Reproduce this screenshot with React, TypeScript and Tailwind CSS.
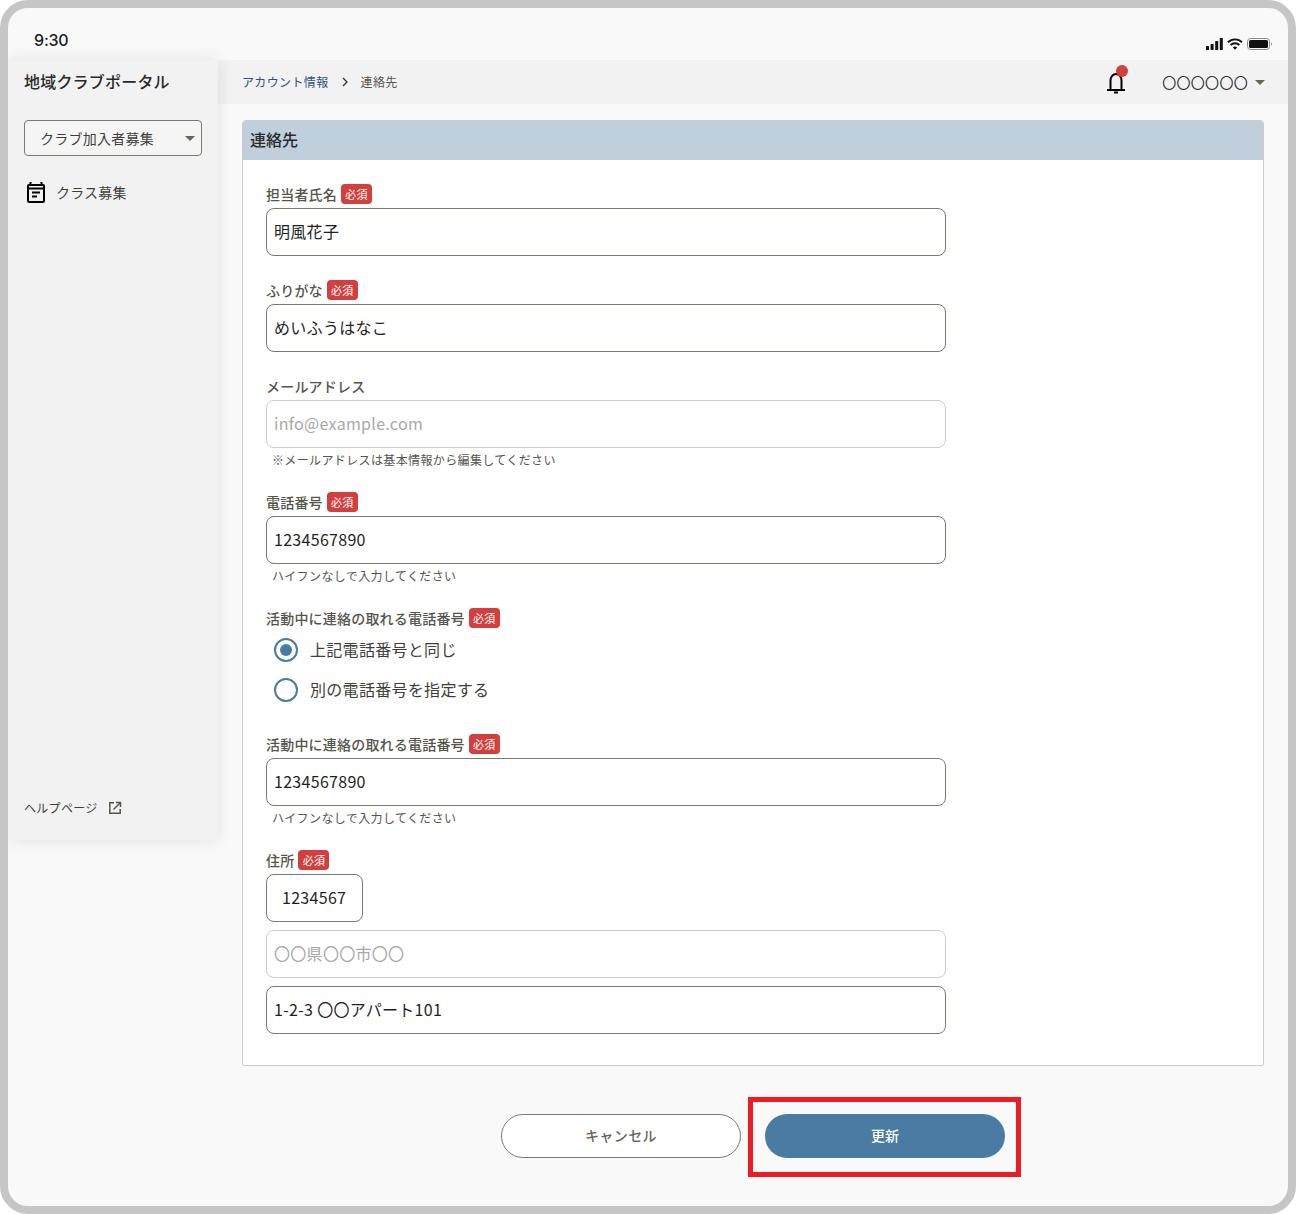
function Required() {
  return (
    <span className="ml-1 inline-flex h-[20px] w-[31px] items-center justify-center rounded-[4px] bg-[#d33f3d] text-[11px] leading-none tracking-[0.2px] text-white">
      必須
    </span>
  );
}

function FieldLabel({ text, required }: { text: string; required?: boolean }) {
  return (
    <div className="flex h-[24px] items-start">
      <span className="text-[14px] leading-[20px] font-medium tracking-[0.2px] text-[#55554b]">{text}</span>
      {required && <Required />}
    </div>
  );
}

function TextInput({ value, disabled, className = 'w-[680px] px-[7px]' }: { value: string; disabled?: boolean; className?: string }) {
  return (
    <input
      readOnly
      value={value}
      className={`block h-[48px] rounded-[8px] border bg-white pb-[2px] text-[16px] tracking-[0.3px] outline-none ${className} ${
        disabled ? 'border-[#cccccc] text-[#a8a8a8]' : 'border-[#7a7a6a] text-[#1f1f1f]'
      }`}
    />
  );
}

function Hint({ text }: { text: string }) {
  return <p className="h-[20px] pl-[6px] text-[12px] leading-[24px] tracking-[0.37px] text-[#55554b]">{text}</p>;
}

function Radio({ label, checked }: { label: string; checked?: boolean }) {
  return (
    <label className="flex h-[40px] items-center pl-2">
      <span className="flex h-[24px] w-[24px] items-center justify-center rounded-full border-2 border-[#4a7ba3] bg-white">
        {checked && <span className="h-[12px] w-[12px] rounded-full bg-[#4a7ba3]" />}
      </span>
      <span className="mb-[2px] ml-3 text-[16px] tracking-[0.3px] text-[#3f3f38]">{label}</span>
    </label>
  );
}

function CalendarIcon() {
  return (
    <svg width="24" height="24" viewBox="0 0 24 24" fill="none" stroke="#000" strokeWidth="2">
      <rect x="4" y="4" width="16" height="17" rx="1" />
      <path d="M4 7.5h16" strokeWidth="2" />
      <path d="M6.5 1v3M17.5 1v3" />
      <path d="M8 11.5h8M8 15.5h5" strokeWidth="1.8" />
    </svg>
  );
}

function BellIcon() {
  return (
    <svg width="24" height="24" viewBox="0 0 24 24" fill="none" stroke="#000" strokeWidth="2">
      <path d="M6.5 20v-9.5a5.5 6.5 0 0 1 11 0V20" />
      <path d="M3 20h18" />
      <path d="M10 22.5h4" />
    </svg>
  );
}

function ExternalIcon() {
  return (
    <svg width="14" height="14" viewBox="0 0 14 14" fill="none" stroke="#55554b" strokeWidth="1.5">
      <path d="M6 1.8H1.8v10.4h10.4V8" />
      <path d="M5.5 8.5 12 2" />
      <path d="M8 1.5h4.500V6" />
    </svg>
  );
}

function StatusIcons() {
  return (
    <div className="flex items-center gap-[4px]">
      <svg width="17" height="12" viewBox="0 0 17 12" fill="#111">
        <rect x="0" y="8" width="3" height="4" rx="0.6" />
        <rect x="4.6" y="6" width="3" height="6" rx="0.6" />
        <rect x="9.2" y="3" width="3" height="9" rx="0.6" />
        <rect x="13.8" y="0" width="3" height="12" rx="0.6" />
      </svg>
      <svg width="16" height="12" viewBox="0 0 16 12" fill="none" stroke="#111" strokeWidth="1.9">
        <path d="M1 4.2a10 10 0 0 1 14 0" />
        <path d="M3.6 7a6.3 6.3 0 0 1 8.8 0" />
        <path d="M8 11.8 5.8 9.5a3.2 3.2 0 0 1 4.4 0Z" fill="#111" stroke="none" />
      </svg>
      <svg width="25" height="12" viewBox="0 0 25 12" fill="none">
        <rect x="0.5" y="0.5" width="22" height="11" rx="3" stroke="#8a8a8a" />
        <rect x="2" y="2" width="19" height="8" rx="1.6" fill="#111" />
        <path d="M24 4.2c.6.3 1 .9 1 1.8s-.4 1.5-1 1.8Z" fill="#8a8a8a" />
      </svg>
    </div>
  );
}

export default function App() {
  return (
    <div className="h-[1214px] w-[1296px] bg-white">
      <div className="flex h-full w-full flex-col overflow-hidden rounded-[28px] border-8 border-[#c6c6c6] bg-[#f9f9f9] font-['Noto_Sans_CJK_JP','Noto_Sans',sans-serif]">
        {/* status bar */}
        <div className="flex h-[52px] shrink-0 items-end justify-between pr-[16px] pb-[10px] pl-[26px]">
          <span className="mb-[-1px] font-['Inter',sans-serif] text-[16px] leading-[22px] font-medium tracking-[-0.2px] text-[#1c1c1c]">9:30</span>
          <StatusIcons />
        </div>

        <div className="flex min-h-0 flex-1">
          {/* sidebar */}
          <aside className="z-10 flex h-[780px] w-[210px] shrink-0 flex-col rounded-b-[4px] rounded-tr-[4px] bg-[#f2f2f2] px-4 shadow-[0_0_16px_rgba(0,0,0,0.10)]">
            <h1 className="mt-[9px] text-[16px] leading-[24px] font-medium tracking-[0.2px] text-[#2a2a2a]">地域クラブポータル</h1>
            <div className="mt-[27px] flex h-[36px] w-[178px] items-center justify-between rounded-[4px] border border-[#7a7a6a] bg-[#f5f5f5] pr-[6px] pl-[15px]">
              <span className="text-[14px] tracking-[0.25px] text-[#3f3f38]">クラブ加入者募集</span>
              <span className="h-0 w-0 border-x-[5px] border-t-[5px] border-x-transparent border-t-[#666658]" />
            </div>
            <div className="mt-[25px] flex h-[24px] items-center">
              <CalendarIcon />
              <span className="mb-[2px] ml-[8px] text-[14px] tracking-[0.2px] text-[#3f3f38]">クラス募集</span>
            </div>
            <div className="mt-auto mb-[22px] flex h-[20px] items-center">
              <span className="text-[12px] tracking-[0.3px] text-[#3f3f38]">ヘルプページ</span>
              <span className="ml-[10px]">
                <ExternalIcon />
              </span>
            </div>
          </aside>

          {/* main */}
          <main className="min-w-0 flex-1">
            <header className="flex h-[44px] items-center justify-between bg-[#f2f2f2] pr-[23px] pl-[24px]">
              <nav className="flex items-center text-[12px] tracking-[0.03em]">
                <span className="text-[#2e5578]">アカウント情報</span>
                <svg className="mx-[12px]" width="8" height="10" viewBox="0 0 8 10" fill="none" stroke="#333" strokeWidth="1.3">
                  <path d="M2 1l4 4-4 4" />
                </svg>
                <span className="text-[#55554b]">連絡先</span>
              </nav>
              <div className="flex items-center">
                <div className="relative mr-[34px] h-[24px] w-[24px]">
                  <BellIcon />
                  <span className="absolute top-[-5px] right-0 h-[12px] w-[12px] rounded-full bg-[#d33f3d]" />
                </div>
                <span className="text-[14px] tracking-[0.3px] text-[#2a2a2a]">〇〇〇〇〇〇</span>
                <span className="ml-[7px] h-0 w-0 border-x-[5px] border-t-[5px] border-x-transparent border-t-[#666658]" />
              </div>
            </header>

            <div className="px-6 pt-4">
              <section className="overflow-hidden rounded-t-[4px] rounded-b-[2px] border border-[#cccccc] bg-white">
                <h2 className="-mx-px -mt-px h-[40px] bg-[#bfd0dc] pl-[8px] text-[16px] leading-[38px] font-medium text-[#2a2a2a]">連絡先</h2>
                <div className="px-[23px] pt-[24px] pb-[31px]">
                  <div className="mb-[24px]">
                    <FieldLabel text="担当者氏名" required />
                    <TextInput value="明風花子" />
                  </div>
                  <div className="mb-[24px]">
                    <FieldLabel text="ふりがな" required />
                    <TextInput value="めいふうはなこ" />
                  </div>
                  <div className="mb-[24px]">
                    <FieldLabel text="メールアドレス" />
                    <TextInput value="info@example.com" disabled />
                    <Hint text="※メールアドレスは基本情報から編集してください" />
                  </div>
                  <div className="mb-[24px]">
                    <FieldLabel text="電話番号" required />
                    <TextInput value="1234567890" />
                    <Hint text="ハイフンなしで入力してください" />
                  </div>
                  <div className="mb-[24px]">
                    <FieldLabel text="活動中に連絡の取れる電話番号" required />
                    <div className="-mt-[2px]">
                      <Radio label="上記電話番号と同じ" checked />
                      <Radio label="別の電話番号を指定する" />
                    </div>
                  </div>
                  <div className="mb-[24px]">
                    <FieldLabel text="活動中に連絡の取れる電話番号" required />
                    <TextInput value="1234567890" />
                    <Hint text="ハイフンなしで入力してください" />
                  </div>
                  <div>
                    <FieldLabel text="住所" required />
                    <div className="flex flex-col gap-2">
                      <TextInput value="1234567" className="w-[97px] px-[15px]" />
                      <TextInput value="〇〇県〇〇市〇〇" disabled />
                      <TextInput value="1-2-3 〇〇アパート101" />
                    </div>
                  </div>
                </div>
              </section>

              <div className="mt-[48px] flex justify-center gap-6">
                <button className="h-[44px] w-[240px] rounded-full border border-[#7a7a6a] bg-white pb-[1px] text-[14px] font-medium tracking-[0.03em] text-[#66665a]">
                  キャンセル
                </button>
                <div className="relative">
                  <button className="h-[44px] w-[240px] rounded-full bg-[#4a7ba3] pb-[1px] text-[14px] font-medium text-white">更新</button>
                  <div className="absolute top-[-17px] left-[-17px] h-[80px] w-[273px] border-[5px] border-[#ed1c24]" />
                </div>
              </div>
            </div>
          </main>
        </div>
      </div>
    </div>
  );
}
